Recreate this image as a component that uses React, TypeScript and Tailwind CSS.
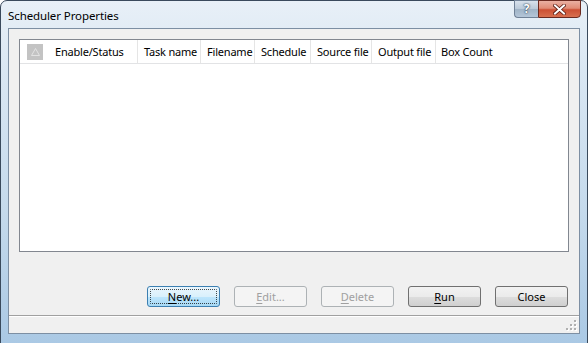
import React from "react";

const font = { fontFamily: '"Noto Sans", "Open Sans", Arial, sans-serif' };

function Btn({ label, u, rest, kind }: { label?: string; u?: string; rest?: string; kind: "default" | "normal" | "disabled" }) {
  const base = "relative w-[73px] h-[21px] rounded-[3px] border flex items-center justify-center text-[11px] leading-none";
  let cls = "";
  if (kind === "default") cls = "border-[#3c7fb1] bg-[linear-gradient(to_bottom,#eaf6fd_0%,#d9f0fc_50%,#bee6fd_51%,#a7d9f5_100%)] text-black";
  else if (kind === "normal") cls = "border-[#707070] bg-[linear-gradient(to_bottom,#f2f2f2_0%,#ebebeb_50%,#dddddd_51%,#cfcfcf_100%)] text-black";
  else cls = "border-[#adb2b5] bg-[#f4f4f4] text-[#a0a0a0]";
  return (
    <div className={`${base} ${cls}`}>
      {kind === "default" && (
        <div className="absolute inset-[2px] border border-dotted border-black/70 rounded-[1px]" />
      )}
      <span className="relative">
        {u && <span className="underline underline-offset-2">{u}</span>}
        {rest}
        {label}
      </span>
    </div>
  );
}

export default function App() {
  const cols = [
    { w: 63, t: "Task name" },
    { w: 54, t: "Filename" },
    { w: 56, t: "Schedule" },
    { w: 61, t: "Source file" },
    { w: 64, t: "Output file" },
  ];
  return (
    <div className="w-[588px] h-[343px] overflow-hidden" style={font}>
      <div className="w-[588px] h-[351px] rounded-t-[7px] border border-[#3a4a5c] bg-[linear-gradient(to_bottom,#e8f0f7_0%,#dae7f3_20%,#c5daec_60%,#a9c8e4_100%)] flex flex-col">
        {/* title bar */}
        <div className="h-[27px] flex items-start justify-between pl-[7px] pr-[6px]">
          <div className="text-[11.5px] text-black mt-[6px] tracking-[-0.1px]">Scheduler Properties</div>
          <div className="flex -mt-px">
            <div className="w-[24px] h-[18px] rounded-bl-[4px] border border-[#6f8196] border-r-0 bg-[linear-gradient(to_bottom,#d8e2ec_0%,#b9c9d8_50%,#9fb3c6_51%,#b4c6d8_100%)] flex items-center justify-center text-[12px] font-bold text-white [text-shadow:0_0_1px_#2a3a4c,0_0_2px_#2a3a4c]">?</div>
            <div className="w-[43px] h-[18px] rounded-br-[4px] border border-[#6b2a20] bg-[linear-gradient(to_bottom,#eab0a2_0%,#e08c76_45%,#cc5034_55%,#d8704f_100%)] flex items-center justify-center">
              <svg width="13" height="11" viewBox="0 0 13 11">
                <path d="M2 1.5 L11 9.5 M11 1.5 L2 9.5" stroke="#5a1a10" strokeWidth="3.6" strokeLinecap="square" />
                <path d="M2 1.5 L11 9.5 M11 1.5 L2 9.5" stroke="#ffffff" strokeWidth="2" strokeLinecap="square" />
              </svg>
            </div>
          </div>
        </div>
        {/* client area */}
        <div className="mx-[7px] h-[306px] border border-[#7d8fa3] bg-[#f0f0f0] flex flex-col">
          <div className="px-[10px] pt-[10px]">
            <div className="h-[213px] border border-[#828790] bg-white">
              <div className="h-[24px] flex items-stretch border-b border-[#e2e3e5] text-[11px] text-black tracking-[-0.2px]">
                <div className="w-[118px] flex items-center pl-[7px] border-r border-[#e5e5e5]">
                  <div className="w-[16px] h-[16px] bg-[#c3c3c3] flex items-center justify-center">
                    <svg width="9" height="8" viewBox="0 0 9 8">
                      <path d="M4.5 0.5 L8.5 7.5 L0.5 7.5 Z" fill="none" stroke="#e2e2e2" strokeWidth="1" />
                    </svg>
                  </div>
                  <span className="ml-[12px] pt-[2px]">Enable/Status</span>
                </div>
                {cols.map((c) => (
                  <div key={c.t} className="flex items-center pt-[2px] pl-[6px] border-r border-[#e5e5e5] whitespace-nowrap overflow-hidden" style={{ width: c.w }}>
                    {c.t}
                  </div>
                ))}
                <div className="flex items-center pt-[2px] pl-[5px] whitespace-nowrap">Box Count</div>
              </div>
            </div>
          </div>
          <div className="flex justify-end gap-[14px] pr-[11px] mt-[34px]">
            <Btn kind="default" u="N" rest="ew..." />
            <Btn kind="disabled" u="E" rest="dit..." />
            <Btn kind="disabled" u="D" rest="elete" />
            <Btn kind="normal" u="R" rest="un" />
            <Btn kind="normal" label="Close" />
          </div>
          <div className="mt-[8px] flex-1 border-t border-[#a0a0a0] shadow-[inset_0_1px_0_#ffffff] relative">
            <svg className="absolute right-[2px] bottom-[2px]" width="11" height="11" viewBox="0 0 11 11">
              {[[9, 1], [9, 5], [9, 9], [5, 5], [5, 9], [1, 9]].map(([x, y], i) => (
                <g key={i}>
                  <rect x={x} y={y} width="2" height="2" fill="#ffffff" />
                  <rect x={x - 1} y={y - 1} width="2" height="2" fill="#b0b0b0" />
                </g>
              ))}
            </svg>
          </div>
        </div>
      </div>
    </div>
  );
}
